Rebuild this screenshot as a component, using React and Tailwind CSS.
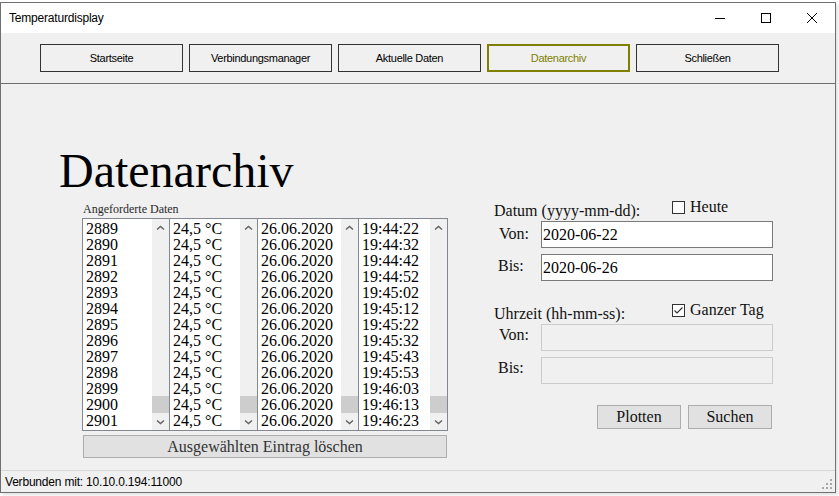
import React from 'react';

const ids = ['2889', '2890', '2891', '2892', '2893', '2894', '2895', '2896', '2897', '2898', '2899', '2900', '2901'];
const temps = ids.map(() => '24,5 °C');
const dates = ids.map(() => '26.06.2020');
const times = ['19:44:22', '19:44:32', '19:44:42', '19:44:52', '19:45:02', '19:45:12', '19:45:22', '19:45:32', '19:45:43', '19:45:53', '19:46:03', '19:46:13', '19:46:23'];

const navItems = ['Startseite', 'Verbindungsmanager', 'Aktuelle Daten', 'Datenarchiv', 'Schließen'];

const Chevron = ({ down }) => (
  <svg width="9" height="6" viewBox="0 0 9 6">
    <polyline points={down ? '1,1.5 4.5,4.5 8,1.5' : '1,4.5 4.5,1.5 8,4.5'} fill="none" stroke="#606060" strokeWidth="1.4" />
  </svg>
);

const ListBox = ({ items, className }) => (
  <div className={`h-[213px] border border-[#828790] bg-white flex ${className}`}>
    <div className="flex-1 overflow-hidden pt-[2px] pl-[3px] text-[16px] leading-[16px] text-black whitespace-nowrap">
      {items.map((item, i) => (
        <div key={i}>{item}</div>
      ))}
    </div>
    <div className="w-[17px] bg-[#f0f0f0] flex flex-col">
      <div className="h-[17px] flex items-center justify-center">
        <Chevron />
      </div>
      <div className="flex-1" />
      <div className="h-[17px] bg-[#cdcdcd]" />
      <div className="h-[17px] flex items-center justify-center">
        <Chevron down />
      </div>
    </div>
  </div>
);

const Check = ({ checked, label }) => (
  <div className="flex items-start">
    <div className="mt-[2px] w-[13px] h-[13px] border border-[#333333] bg-white flex items-center justify-center">
      {checked && (
        <svg width="11" height="11" viewBox="0 0 11 11">
          <polyline points="1.5,5.5 4,8 9.5,2.5" fill="none" stroke="#333333" strokeWidth="1.2" />
        </svg>
      )}
    </div>
    <span className="ml-[5px] text-[16px] leading-[16px]">{label}</span>
  </div>
);

const App = () => {
  return (
    <div className="w-[839px] h-[496px] bg-white overflow-hidden">
      <div className="mt-[2px] w-[836px] h-[491px] border border-[#707070] bg-[#f0f0f0] flex flex-col shadow-[2px_2px_3px_rgba(0,0,0,0.12)]">
        {/* title bar */}
        <div className="h-[30px] bg-white flex items-center justify-between">
          <span className="pl-[8px] font-['Liberation_Sans',Arial,sans-serif] text-[12px] tracking-[-0.2px] text-black">Temperaturdisplay</span>
          <div className="flex h-full">
            <div className="w-[46px] flex items-center justify-center">
              <svg width="10" height="10" viewBox="0 0 10 10">
                <line x1="0" y1="5.5" x2="10" y2="5.5" stroke="#000" strokeWidth="1" />
              </svg>
            </div>
            <div className="w-[46px] flex items-center justify-center">
              <svg width="10" height="10" viewBox="0 0 10 10">
                <rect x="0.5" y="0.5" width="9" height="9" fill="none" stroke="#000" strokeWidth="1" />
              </svg>
            </div>
            <div className="w-[46px] flex items-center justify-center">
              <svg width="10" height="10" viewBox="0 0 10 10">
                <path d="M0 0 L10 10 M10 0 L0 10" stroke="#000" strokeWidth="1" />
              </svg>
            </div>
          </div>
        </div>

        {/* navigation */}
        <nav className="h-[51px] border-b border-[#6e6e6e] flex gap-[6px] pl-[39px] pt-[11px] font-['Liberation_Sans',Arial,sans-serif] text-[11px] tracking-[-0.3px]">
          {navItems.map((item) =>
            item === 'Datenarchiv' ? (
              <button key={item} className="w-[143px] h-[28px] border-2 border-[#808000] bg-[#f0f0f0] text-[#808000]">
                {item}
              </button>
            ) : (
              <button key={item} className="w-[143px] h-[28px] border border-[#333333] bg-[#f0f0f0] text-black">
                {item}
              </button>
            )
          )}
        </nav>

        {/* content */}
        <main className="flex-1 flex font-['Liberation_Serif','Times_New_Roman',serif] text-[#111111]">
          <div className="w-[447px] pl-[58px] flex flex-col">
            <h1 className="mt-[63px] h-[48px] text-[48px] leading-[48px] text-black">Datenarchiv</h1>
            <div className="mt-[8px] ml-[24px] text-[12px] leading-[12px] text-[#2a2a2a]">Angeforderte Daten</div>
            <div className="mt-[3px] ml-[23px] flex">
              <ListBox items={ids} className="w-[88px]" />
              <ListBox items={temps} className="w-[89px] -ml-px" />
              <ListBox items={dates} className="w-[102px] -ml-px" />
              <ListBox items={times} className="w-[90px] -ml-px" />
            </div>
            <button className="mt-[4px] ml-[24px] w-[364px] h-[23px] border border-[#adadad] bg-[#e1e1e1] text-[16px] leading-[16px] text-[#333333]">
              Ausgewählten Eintrag löschen
            </button>
          </div>

          <div className="ml-[46px] mt-[115px] flex flex-col text-[16px] leading-[16px]">
            <div className="flex h-[22px]">
              <span className="w-[178px] mt-[4px]">Datum (yyyy-mm-dd):</span>
              <Check label="Heute" />
            </div>
            <div className="flex h-[27px]">
              <span className="w-[47px] pl-[5px] mt-[5px]">Von:</span>
              <div className="w-[232px] h-[27px] border border-[#7a7a7a] bg-white pl-[1px] flex items-center text-black">2020-06-22</div>
            </div>
            <div className="mt-[6px] flex h-[27px]">
              <span className="w-[47px] pl-[4px] mt-[4px]">Bis:</span>
              <div className="w-[232px] h-[27px] border border-[#7a7a7a] bg-white pl-[1px] flex items-center text-black">2020-06-26</div>
            </div>

            <div className="mt-[21px] flex h-[22px]">
              <span className="w-[178px] mt-[4px]">Uhrzeit (hh-mm-ss):</span>
              <Check checked label="Ganzer Tag" />
            </div>
            <div className="flex h-[27px]">
              <span className="w-[47px] pl-[5px] mt-[3px]">Von:</span>
              <div className="w-[232px] h-[27px] border border-[#cccccc] bg-[#f0f0f0]" />
            </div>
            <div className="mt-[6px] flex h-[27px]">
              <span className="w-[47px] pl-[4px] mt-[3px]">Bis:</span>
              <div className="w-[232px] h-[27px] border border-[#cccccc] bg-[#f0f0f0]" />
            </div>

            <div className="mt-[21px] ml-[103px] flex gap-[7px]">
              <button className="w-[84px] h-[24px] border border-[#adadad] bg-[#e1e1e1] text-[16px] leading-[16px]">Plotten</button>
              <button className="w-[84px] h-[24px] border border-[#adadad] bg-[#e1e1e1] text-[16px] leading-[16px]">Suchen</button>
            </div>
          </div>
        </main>

        {/* status bar */}
        <footer className="h-[22px] border-t border-[#d7d7d7] flex justify-between font-['Liberation_Sans',Arial,sans-serif] text-[12px] tracking-[-0.2px] text-black">
          <span className="pl-[4px] self-center">Verbunden mit: 10.10.0.194:11000</span>
          <svg className="self-end mb-[2px] mr-[2px]" width="11" height="11" viewBox="0 0 11 11">
            <rect x="8" y="0" width="2" height="2" fill="#a8a8a8" />
            <rect x="4" y="4" width="2" height="2" fill="#a8a8a8" />
            <rect x="8" y="4" width="2" height="2" fill="#a8a8a8" />
            <rect x="0" y="8" width="2" height="2" fill="#a8a8a8" />
            <rect x="4" y="8" width="2" height="2" fill="#a8a8a8" />
            <rect x="8" y="8" width="2" height="2" fill="#a8a8a8" />
          </svg>
        </footer>
      </div>
    </div>
  );
};

export default App;
